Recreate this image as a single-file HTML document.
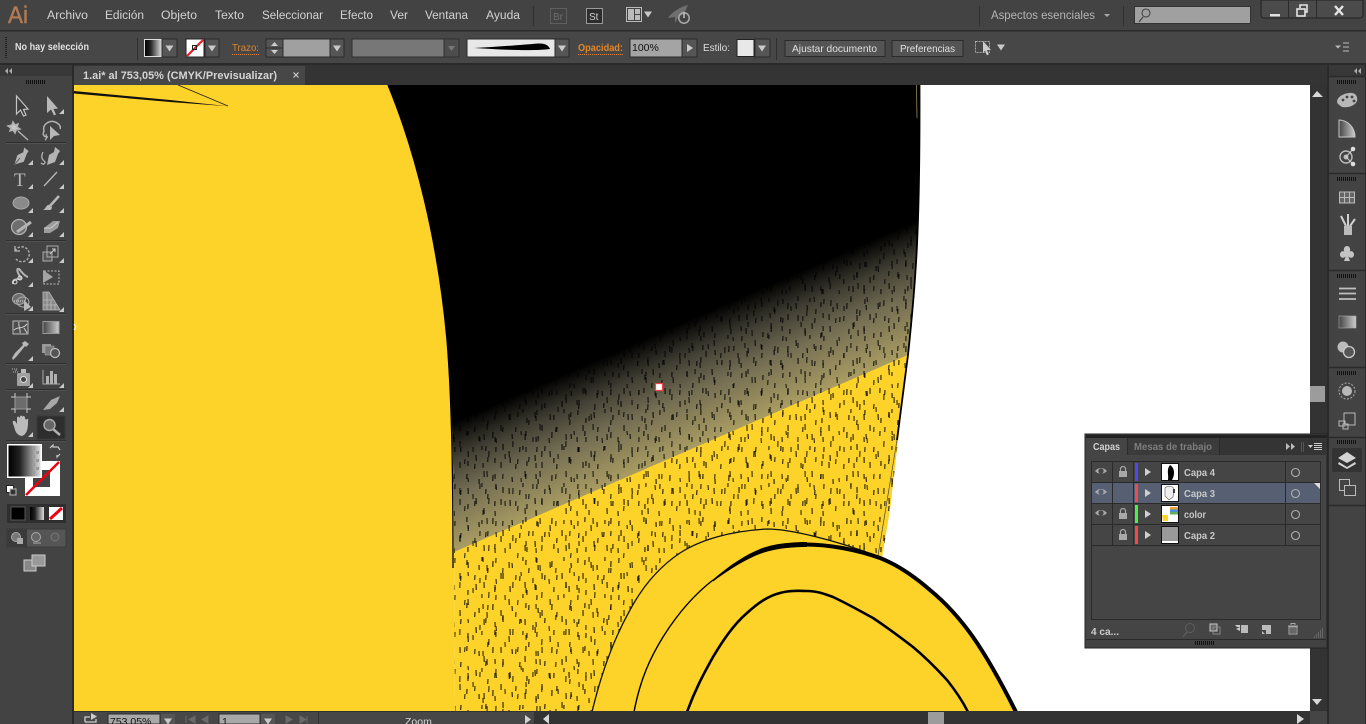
<!DOCTYPE html>
<html lang="es"><head><meta charset="utf-8"><title>Illustrator</title>
<style>
html,body{margin:0;padding:0;background:#434343;width:1366px;height:724px;overflow:hidden}
svg{display:block;position:absolute;left:0;top:0}
text{font-family:"Liberation Sans",sans-serif;font-size:11px;fill:#d0d0d0}
.m{font-size:11.5px;fill:#d2d2d2}
.b{font-weight:bold}
.lay{font-size:10.5px;font-weight:bold;fill:#c8c8c8}
</style></head><body>
<svg width="1366" height="724" viewBox="0 0 1366 724" xmlns="http://www.w3.org/2000/svg">
<defs>
<linearGradient id="shade" gradientUnits="userSpaceOnUse" x1="680" y1="306" x2="734" y2="430">
<stop offset="0" stop-color="#000"/><stop offset=".12" stop-color="#000"/><stop offset=".36" stop-color="#403e33"/><stop offset=".62" stop-color="#736d53"/><stop offset="1" stop-color="#a99c62"/>
</linearGradient>
<linearGradient id="bw" x1="0" x2="1" y1="0" y2="0"><stop offset="0" stop-color="#000"/><stop offset=".35" stop-color="#222"/><stop offset="1" stop-color="#ddd"/></linearGradient>
<linearGradient id="gg" x1="0" x2="1" y1="0" y2="0"><stop offset="0" stop-color="#444"/><stop offset="1" stop-color="#ccc"/></linearGradient>
<pattern id="tA" patternUnits="userSpaceOnUse" width="41" height="37">
<path fill="none" stroke="#000" stroke-opacity=".8" stroke-width="1.150" d="M4 3l-.2 5M17 7l.3 6M31 2l-.1 4M37 13l-.3 5M9 18l.1 6M24 20l-.3 5M3 30l.2 5M33 27l.2 6"/>
</pattern>
<pattern id="tB" patternUnits="userSpaceOnUse" width="53" height="47">
<path fill="none" stroke="#000" stroke-opacity=".8" stroke-width="1.100" d="M10 1l.2 6M26 4l-.3 5M44 8l.3 4M3 14l-.1 5M19 15l.4 5M36 18l-.2 6M49 24l.1 5M12 28l-.3 6M28 31l.2 5M41 36l-.4 5M6 40l.1 5"/>
</pattern>
<pattern id="tC" patternUnits="userSpaceOnUse" width="59" height="43">
<path fill="none" stroke="#000" stroke-opacity=".8" stroke-width="1.200" d="M7 6l.2 5M21 2l-.2 6M40 4l.4 5M54 1l-.2 5M14 16l-.3 5M31 14l.1 6M48 17l-.4 5M4 25l.3 6M23 28l-.2 5M38 27l.2 6M55 31l-.1 5"/>
</pattern>
<clipPath id="jk"><path d="M388 85C415 150 438 240 447 340C451 390 454 450 454 552L455 711H860L882 558L890 510L908 355C916 280 920 230 920 85Z"/></clipPath>
<clipPath id="canvas"><rect x="74" y="85" width="1236" height="626"/></clipPath>
<path id="mk" d="M0 0h-5l5-5z" fill="#c8c8c8"/>
<path id="dn" d="M-4-2.500h8l-4 6z" fill="#c9c9c9"/>
<path id="eye" d="M-6 0C-3-4 3-4 6 0C3 3.500-3 3.500-6 0Z M0-2.600A2.600 2.600 0 1 0 0 2.600A2.600 2.600 0 1 0 0-2.600Z" fill="#a8a8a8" fill-rule="evenodd"/>
<g id="lock"><path d="M-2.500-1v-2a2.500 2.500 0 0 1 5 0v2" fill="none" stroke="#a8a8a8" stroke-width="1.200"/><rect x="-4" y="-1" width="8" height="6" fill="#a8a8a8"/></g>
<g id="grip"><path d="M.5 0v4M2.500 0v4M4.500 0v4M6.500 0v4M8.500 0v4M10.500 0v4M12.500 0v4M14.500 0v4M16.500 0v4M18.500 0v4" stroke="#111" stroke-width="1"/></g>
</defs>

<!-- UI base -->
<rect width="1366" height="724" fill="#434343"/>
<rect y="30" width="1366" height="1.500" fill="#2b2b2b"/>
<rect y="31.500" width="1366" height="32" fill="#474747"/>
<rect y="63" width="1366" height="2" fill="#2a2a2a"/>
<rect x="74" y="65" width="1254" height="20" fill="#343434"/>

<!-- Artwork -->
<g clip-path="url(#canvas)">
<rect x="74" y="85" width="1236" height="626" fill="#fff"/>
<path d="M74 85H388C415 150 438 240 447 340C451 390 454 450 454 552L455 711H74Z" fill="#fdd329"/>
<path d="M388 85C415 150 438 240 447 340C451 390 454 450 454 552L455 711H860L882 558L890 510L908 355C916 280 920 230 920 85Z" fill="#fdd329"/>
<path d="M388 85C415 150 438 240 447 340C451 390 454 450 454 552L908 355C916 280 920 230 920 85Z" fill="url(#shade)"/>
<g clip-path="url(#jk)">
<rect x="440" y="200" width="480" height="511" fill="url(#tA)"/>
<rect x="440" y="200" width="480" height="511" fill="url(#tB)"/>
<rect x="440" y="200" width="480" height="511" fill="url(#tC)"/>
</g>
<path d="M388 85C415 150 438 240 447 340C451 390 453 450 453 568" fill="none" stroke="#000" stroke-width="1.300"/>
<path d="M919.500 85C920 230 916 280 908 355L897 440" fill="none" stroke="#000" stroke-width="1.800"/>
<path d="M916.500 85L917 118" fill="none" stroke="#a99c62" stroke-width=".7"/>
<path d="M897 440L878 556" fill="none" stroke="#444" stroke-width=".7"/>
<path d="M74 91L74 93.500L170 102L228 106.300L170 100Z" fill="#111"/>
<path d="M178 85L228 106" fill="none" stroke="#222" stroke-width=".9"/>
<!-- hump -->
<path d="M592 712C602 670 616 635 630 610C645 582 662 565 680 553C700 540 730 531 767 529C790 529 835 540 877 556C898 565 915 577 930 590C947 604 961 620 973 637C989 660 1005 690 1016 712Z" fill="#fdd329"/>
<path d="M592 712C602 670 616 635 630 610C645 582 662 565 680 553C700 540 730 531 767 529C790 529 835 540 877 556" fill="none" stroke="#111" stroke-width="1.300"/>
<path d="M634 712C640 680 650 658 663 637C678 613 695 594 713 580" fill="none" stroke="#000" stroke-width="1.400"/>
<path d="M713 579.500C730 565 745 555 760 549C775 543 795 542 807 542L807 547C793 547 777 548 761 553.500C746 559 730 569 713 581.500Z" fill="#000"/>
<path d="M805 544.500C830 544.500 858 550 880 558C898 565 915 577 930 590C947 604 961 620 973 637C989 660 1005 690 1016 712" fill="none" stroke="#000" stroke-width="4"/>
<path d="M687 712C695 690 703 675 713 657C722 642 733 625 747 613C758 603 768 596 780 593C790 590 800 591 807 591C817 591 825 594 833 597C848 604 860 611 873 618C888 628 900 637 913 647C925 657 936 668 947 680C955 690 962 700 968 712" fill="none" stroke="#000" stroke-width="2.600"/>
<rect x="655.500" y="383.500" width="7" height="7" fill="#fff" stroke="#f0404a" stroke-width="1.200"/>
</g>

<!-- Menu bar -->
<text x="8" y="23" style="font-size:24px;fill:#b07a52;stroke:#b07a52;stroke-width:.5" textLength="20" lengthAdjust="spacingAndGlyphs">Ai</text>
<text class="m" x="47" y="19" textLength="41" lengthAdjust="spacingAndGlyphs">Archivo</text>
<text class="m" x="105" y="19" textLength="39" lengthAdjust="spacingAndGlyphs">Edición</text>
<text class="m" x="161" y="19" textLength="36" lengthAdjust="spacingAndGlyphs">Objeto</text>
<text class="m" x="215" y="19" textLength="29" lengthAdjust="spacingAndGlyphs">Texto</text>
<text class="m" x="262" y="19" textLength="61" lengthAdjust="spacingAndGlyphs">Seleccionar</text>
<text class="m" x="340" y="19" textLength="33" lengthAdjust="spacingAndGlyphs">Efecto</text>
<text class="m" x="390" y="19" textLength="18" lengthAdjust="spacingAndGlyphs">Ver</text>
<text class="m" x="425" y="19" textLength="43" lengthAdjust="spacingAndGlyphs">Ventana</text>
<text class="m" x="486" y="19" textLength="34" lengthAdjust="spacingAndGlyphs">Ayuda</text>
<rect x="533" y="6" width="1" height="20" fill="#2e2e2e"/>
<rect x="550.500" y="8.500" width="16" height="15" fill="none" stroke="#5f5f5f"/>
<text x="553" y="20" style="font-size:10px;fill:#6c6c6c">Br</text>
<rect x="586.500" y="8.500" width="16" height="15" fill="#2d2d2d" stroke="#999"/>
<text x="589" y="20" style="font-size:10px;fill:#d0d0d0">St</text>
<rect x="626.500" y="7.500" width="15" height="14" fill="none" stroke="#bbb"/>
<rect x="628" y="9" width="6" height="11" fill="#bbb"/><rect x="635" y="9" width="5" height="5" fill="#bbb"/><rect x="635" y="15" width="5" height="5" fill="#bbb"/>
<use href="#dn" x="648" y="14"/>
<path d="M668 18C672 12 680 7 688 5L684 14L679 16L675 23L675 17Z" fill="#6f6f6f"/>
<circle cx="684" cy="18" r="5.200" fill="none" stroke="#aaa" stroke-width="1.500"/><path d="M684 12v6" stroke="#bbb" stroke-width="1.600"/>
<rect x="979" y="6" width="1" height="20" fill="#2e2e2e"/>
<text x="991" y="19" style="font-size:12px;fill:#b4b4b4" textLength="104" lengthAdjust="spacingAndGlyphs">Aspectos esenciales</text>
<path d="M1104 14h6l-3 3z" fill="#aaa"/>
<rect x="1123" y="6" width="1" height="20" fill="#2e2e2e"/>
<rect x="1134.500" y="6.500" width="116" height="17" fill="#a0a0a0" stroke="#333"/>
<circle cx="1146" cy="13" r="4" fill="none" stroke="#444" stroke-width="1.100"/><path d="M1143 17l-4 5" stroke="#444" stroke-width="1.200"/>
<path d="M1261 0h102v15a3 3 0 0 1-3 3h-96a3 3 0 0 1-3-3Z" fill="#4b4b4b" stroke="#222"/>
<path d="M1288.500 0v18M1316.500 0v18" stroke="#2b2b2b"/>
<rect x="1270" y="14" width="10" height="2.500" fill="#e0e0e0"/>
<rect x="1297" y="9" width="8" height="7" fill="none" stroke="#e4e4e4" stroke-width="1.600"/><path d="M1300 8V5h7v7h-2" fill="none" stroke="#e4e4e4" stroke-width="1.600"/>
<path d="M1335 6l8 9M1343 6l-8 9" stroke="#e4e4e4" stroke-width="2.400"/>

<!-- Control bar -->
<path d="M6 37v21" stroke="#222" stroke-width="2" stroke-dasharray="1 1"/>
<text class="b" x="15" y="50" style="font-size:10.500px;fill:#e0e0e0" textLength="74" lengthAdjust="spacingAndGlyphs">No hay selección</text>
<rect x="137" y="38" width="1" height="22" fill="#2f2f2f"/>
<rect x="144.500" y="39.500" width="17" height="17" fill="url(#bw)" stroke="#ddd"/>
<rect x="162" y="39" width="15" height="18" fill="#555" stroke="#2a2a2a"/><use href="#dn" x="169.500" y="48"/>
<rect x="186" y="39" width="18" height="18" fill="#fff" stroke="#222"/><path d="M187 56L203 40" stroke="#ee1c25" stroke-width="2.200"/><rect x="192.500" y="45.500" width="4" height="4" fill="none" stroke="#222"/>
<rect x="205" y="39" width="14" height="18" fill="#555" stroke="#2a2a2a"/><use href="#dn" x="212" y="48"/>
<text x="232" y="51" style="font-size:10.500px;fill:#e0862c" textLength="27" lengthAdjust="spacingAndGlyphs">Trazo:</text>
<path d="M232 54.500h27" stroke="#e0862c" stroke-dasharray="1 1"/>
<rect x="266" y="39" width="17" height="18" fill="#555" stroke="#2a2a2a"/><path d="M266 48h17" stroke="#2a2a2a"/><path d="M271 46l3.500-4 3.500 4zM271 50l3.500 4 3.500-4z" fill="#ccc"/>
<rect x="283" y="39" width="47" height="18" fill="#a0a0a0" stroke="#2a2a2a"/>
<rect x="330" y="39" width="14" height="18" fill="#555" stroke="#2a2a2a"/><use href="#dn" x="337" y="48"/>
<rect x="352" y="39" width="92" height="18" fill="#777" stroke="#2f2f2f"/>
<rect x="444" y="39" width="15" height="18" fill="#4c4c4c" stroke="#2f2f2f"/><path d="M448 46h7l-3.500 5z" fill="#777"/>
<rect x="467" y="39" width="88" height="18" fill="#e8e8e8" stroke="#2a2a2a"/>
<path d="M474 48C495 47 520 45 538 43.500C546 43 549 46 550 49C535 51 505 50 474 48Z" fill="#000"/>
<rect x="555" y="39" width="14" height="18" fill="#555" stroke="#2a2a2a"/><use href="#dn" x="562" y="48"/>
<text class="b" x="578" y="51" style="font-size:10.500px;fill:#e0862c" textLength="45" lengthAdjust="spacingAndGlyphs">Opacidad:</text>
<path d="M578 54.500h45" stroke="#e0862c" stroke-dasharray="1 1"/>
<rect x="630" y="39" width="52" height="18" fill="#a4a4a4" stroke="#2a2a2a"/>
<text x="632" y="51" style="font-size:10.500px;fill:#111">100%</text>
<rect x="682" y="39" width="15" height="18" fill="#555" stroke="#2a2a2a"/><path d="M687 44l6 4-6 4z" fill="#ccc"/>
<text x="703" y="51" style="font-size:10.500px;fill:#ddd" textLength="27" lengthAdjust="spacingAndGlyphs">Estilo:</text>
<rect x="737" y="39.500" width="17" height="17" fill="#e8e8e8" stroke="#222"/>
<rect x="755" y="39" width="15" height="18" fill="#555" stroke="#2a2a2a"/><use href="#dn" x="762" y="48"/>
<rect x="776" y="38" width="1" height="22" fill="#2f2f2f"/>
<rect x="785" y="40.500" width="100" height="16" fill="#545454" stroke="#2a2a2a"/>
<text x="792" y="52" style="font-size:10.500px;fill:#e0e0e0" textLength="85" lengthAdjust="spacingAndGlyphs">Ajustar documento</text>
<rect x="892" y="40.500" width="71" height="16" fill="#545454" stroke="#2a2a2a"/>
<text x="900" y="52" style="font-size:10.500px;fill:#e0e0e0" textLength="55" lengthAdjust="spacingAndGlyphs">Preferencias</text>
<rect x="975.500" y="41.500" width="14" height="11" fill="none" stroke="#aaa" stroke-dasharray="2 1"/><path d="M983 41l8 9-4 0 1.800 4.500-2 .8-1.800-4.500-2 2.200z" fill="#ccc"/>
<use href="#dn" x="1001" y="47"/>
<path d="M1343 43h6M1343 47h6M1343 51h6" stroke="#bbb"/><path d="M1335 45.500h6l-3 3z" fill="#bbb"/>

<!-- Document tab -->
<rect x="74" y="66" width="231" height="19" fill="#474747"/>
<text x="83" y="79" style="font-size:11px;font-weight:bold;fill:#d4d4d4" textLength="194" lengthAdjust="spacingAndGlyphs">1.ai* al 753,05% (CMYK/Previsualizar)</text>
<path d="M293.500 72.500l5 5M298.500 72.500l-5 5" stroke="#ccc" stroke-width="1.200"/>

<!-- Left tools panel -->
<rect x="0" y="65" width="72" height="659" fill="#434343"/>
<rect x="0" y="65" width="72" height="11" fill="#383838"/>
<rect x="72" y="65" width="2" height="659" fill="#2a2a2a"/>
<path d="M8 68l-3 3 3 3zM12 68l-3 3 3 3z" fill="#aaa"/>
<use href="#grip" x="26" y="80"/>
<path d="M6 142.500h60M6 240.500h60M6 313.500h60M6 363.500h60M6 389.500h60M6 440.500h60" stroke="#2f2f2f" stroke-width="1"/>
<path d="M6 143.500h60M6 241.500h60M6 314.500h60M6 364.500h60M6 390.500h60M6 441.500h60" stroke="#515151" stroke-width="1"/>

<path d="M16.500 96V114L20.500 110L23.500 116L26 115L23.500 109.500L28 109Z" fill="#3c3c3c" stroke="#c4c4c4" stroke-width="1.200"/>
<path d="M47 96V113L51 109.500L54 115.500L56 114.500L53.500 109L58 108.500Z" fill="#b8b8b8"/><use href="#mk" x="64" y="114"/>

<path d="M13 122l2 3 3-1-1 3 3 2-4 1-1 3-2-3-3 1 1-3-3-2 4-1zM18 131l10 9" fill="#c4c4c4" stroke="#b0b0b0" stroke-width="1.500"/>
<path d="M48 137C42 137 43 133 44 131C42 124 50 120 55 122C60 124 61 127 60 129" fill="none" stroke="#b0b0b0" stroke-width="1.500"/><path d="M50 126V140L54 136L60 135Z" fill="#b8b8b8"/><path d="M46 134C47 137 47 139 45 140" fill="none" stroke="#b0b0b0" stroke-width="1.300"/>

<path d="M24 147L29 151L27 154L24 162L14 165L17 155L23 152ZM15 164L20 158" fill="#b4b4b4" stroke="#444" stroke-width=".6"/><use href="#mk" x="33" y="165"/>
<path d="M55 147L60 151L58 154L55 162L47 165L49 155L54 152Z" fill="#b4b4b4"/><path d="M43 152C40 158 43 160 45 162C45 164 43 165 41 163" fill="none" stroke="#b4b4b4" stroke-width="1.300"/><use href="#mk" x="64" y="165"/>

<text x="14" y="186" style="font-family:'Liberation Serif',serif;font-size:19px;fill:#b8b8b8">T</text><use href="#mk" x="33" y="189"/>
<path d="M44 186L57 172" stroke="#b8b8b8" stroke-width="1.300"/><use href="#mk" x="64" y="189"/>

<ellipse cx="21" cy="203" rx="8" ry="6" fill="#8a8a8a" stroke="#aaa"/><use href="#mk" x="33" y="213"/>
<path d="M59 196L49 207" stroke="#b8b8b8" stroke-width="2.500"/><path d="M43 210C46 209 46 204 50 205C53 206 52 210 50 210Z" fill="#b8b8b8"/><use href="#mk" x="64" y="213"/>

<circle cx="19" cy="227" r="7.500" fill="#6e6e6e" stroke="#b4b4b4" stroke-width="1.200"/><path d="M17 232L31 222" stroke="#b4b4b4" stroke-width="3"/><use href="#mk" x="33" y="237"/>
<path d="M44 228L53 221H60L58 228L50 233H44Z" fill="#9c9c9c"/><path d="M44 228H51L58 222" stroke="#ccc" fill="none"/><use href="#mk" x="64" y="237"/>

<path d="M15 251A7.500 7.500 0 1 1 16 259" fill="none" stroke="#aaa" stroke-width="1.500" stroke-dasharray="2.500 1.500"/><path d="M15 246v5h5" fill="none" stroke="#bbb" stroke-width="1.200"/><use href="#mk" x="33" y="263"/>
<rect x="43" y="252" width="9" height="9" fill="#555" stroke="#aaa"/><rect x="47" y="246" width="11" height="11" fill="none" stroke="#aaa"/><path d="M50 254l5-5M52 249h3v3" stroke="#ccc" fill="none"/><use href="#mk" x="64" y="263"/>

<path d="M13 284C12 278 18 280 21 278C17 272 16 268 19 269C22 272 24 276 28 277" fill="none" stroke="#b4b4b4" stroke-width="2"/><circle cx="15" cy="282" r="2" fill="none" stroke="#ddd"/><circle cx="20" cy="278" r="2" fill="none" stroke="#ddd"/><use href="#mk" x="33" y="287"/>
<rect x="44" y="271" width="15" height="13" fill="none" stroke="#bbb" stroke-dasharray="2 1.500"/><path d="M43 270L53 277L43 283Z" fill="#a4a4a4"/>

<ellipse cx="19" cy="299" rx="6.500" ry="5.500" fill="#6e6e6e" stroke="#aaa"/><ellipse cx="23" cy="302" rx="6" ry="5" fill="none" stroke="#aaa"/><path d="M14 301h12" stroke="#ddd" stroke-dasharray="1 1"/><path d="M24 300V311L31 307Z" fill="#b8b8b8"/><use href="#mk" x="33" y="311"/>
<path d="M43 292H49L60 310H43ZM47 292V310M51 301V310M55 304V310M43 300H53M43 305H57" fill="#888" stroke="#bbb" stroke-width=".8"/><use href="#mk" x="64" y="312"/>

<rect x="13" y="321" width="15" height="13" fill="#4e4e4e" stroke="#bbb"/><path d="M14 330C18 326 22 330 27 324M19 322C18 326 21 331 20 333M24 328L27 333" fill="none" stroke="#ccc"/>
<rect x="43" y="321.500" width="16" height="12" fill="url(#gg)" stroke="#999"/>

<g transform="translate(-30 0)"><path d="M55 341L59 344L56 347L55 346L47 356L43 360L42 358L45 353L53 345L52 343Z" fill="#b8b8b8"/></g><use href="#mk" x="33" y="361"/>
<rect x="42" y="344" width="9" height="9" fill="#999"/><rect x="45" y="346" width="9" height="9" fill="#777" stroke="#aaa" stroke-width=".6"/><circle cx="55" cy="353" r="4.500" fill="#555" stroke="#bbb" stroke-width="1.300"/>

<path d="M12 369h6M13 372h5M16 370v1" stroke="#bbb" stroke-dasharray="1 1"/><rect x="17" y="373" width="13" height="13" rx="1" fill="#a0a0a0"/><rect x="21" y="369" width="5" height="4" fill="#bbb"/><circle cx="23.500" cy="379.500" r="3" fill="#444" stroke="#ddd"/><use href="#mk" x="33" y="388"/>
<path d="M43 370V384H60" fill="none" stroke="#aaa"/><rect x="46" y="376" width="3" height="8" fill="#b0b0b0"/><rect x="50" y="371" width="3" height="13" fill="#b0b0b0"/><rect x="54" y="374" width="3" height="10" fill="#b0b0b0"/><use href="#mk" x="64" y="388"/>

<rect x="15" y="397" width="12" height="12" fill="#6c6c6c" stroke="#999"/><path d="M11 397h4M11 409h4M27 397h4M27 409h4M15 393v4M27 393v4M15 409v4M27 409v4" stroke="#ccc"/>
<path d="M43 410L51 400L60 396L57 403L50 409Z" fill="#a8a8a8"/><use href="#mk" x="64" y="412"/>

<path d="M15 430C14 425 12 423 13 421C15 420 16 422 17 424V418C17 416 19 416 19.500 418L20 417C20 415 22 415 22.500 417C23 415 25 416 25 418L26 420C27 418 29 419 28 421C28 426 28 434 22 436C19 436 16 433 15 430Z" fill="#bbb"/><use href="#mk" x="33" y="437"/>
<rect x="37" y="416" width="28" height="23" fill="#2e2e2e" stroke="#3a3a3a"/>
<circle cx="49.500" cy="425" r="5.500" fill="#666" stroke="#a8a8a8" stroke-width="1.500"/><path d="M53.500 429.500L60 435" stroke="#b0b0b0" stroke-width="2.500"/>

<rect x="25" y="461" width="35" height="35" fill="#fff"/>
<rect x="33" y="470" width="17" height="17" fill="#434343"/>
<rect x="7" y="444" width="35" height="34" fill="#fff"/>
<rect x="8.500" y="445.500" width="32" height="31" fill="url(#bw)"/>
<path d="M32 447h3v3h-3zM36 451h3v3h-3zM32 455h3v3h-3zM36 459h3v3h-3zM32 463h3v3h-3zM36 467h3v3h-3zM32 471h3v3h-3z" fill="#9a9a9a"/>
<path d="M26 495L59 462" stroke="#ee0010" stroke-width="2.400"/>
<path d="M50 448l3-3v2h5l2 3M60 454l-3 3v-2" fill="none" stroke="#c8c8c8" stroke-width="1.200"/>
<rect x="6.500" y="485.500" width="7" height="7" fill="#fff" stroke="#222"/><rect x="10" y="489" width="6" height="6" fill="#333" stroke="#bbb"/>
<rect x="7" y="504" width="59" height="19" fill="#2f2f2f"/>
<rect x="11" y="507" width="14" height="13" fill="#000" stroke="#555"/>
<rect x="30" y="507" width="14" height="13" fill="url(#bw)"/>
<rect x="49" y="507" width="14" height="13" fill="#fff"/><path d="M50 519L62 508" stroke="#ee0010" stroke-width="3"/>
<rect x="7" y="529" width="59" height="18" fill="#555" stroke="#3a3a3a"/>
<rect x="7" y="529" width="20" height="18" fill="#3a3a3a"/>
<circle cx="16" cy="537" r="4.500" fill="#777" stroke="#aaa"/><rect x="17" y="538" width="6" height="6" fill="#aaa"/>
<circle cx="36" cy="537" r="4.500" fill="#666" stroke="#aaa"/><path d="M33 543h8" stroke="#aaa"/>
<circle cx="55" cy="537" r="4" fill="#5a5a5a" stroke="#777"/>
<rect x="24" y="560" width="12" height="11" fill="#888" stroke="#ccc"/><rect x="32" y="555" width="13" height="11" fill="#999" stroke="#ccc"/>
<path d="M74 324l2 3-2 3" stroke="#fff" fill="none"/>

<!-- Right scrollbar -->
<rect x="1310" y="85" width="17" height="627" fill="#333"/>
<path d="M1312 97l5-6 6 6z" fill="#d8d8d8"/>
<rect x="1310" y="386" width="15" height="16" fill="#9c9c9c"/>
<path d="M1312 699h10l-5 6z" fill="#d8d8d8"/>
<!-- bottom -->
<rect x="74" y="711" width="1253" height="13" fill="#333"/>
<rect x="74" y="712" width="460" height="12" fill="#474747"/>
<path d="M85 722V717h5M85 722h11v-3" fill="none" stroke="#ccc" stroke-width="1.300"/><path d="M91 713l6 3.500-6 3.500z" fill="#ccc"/>
<rect x="108" y="714" width="52" height="10" fill="#a8a8a8" stroke="#2c2c2c"/>
<text x="110" y="725" style="font-size:10.500px;fill:#111">753,05%</text>
<rect x="161" y="714" width="14" height="10" fill="#555"/><use href="#dn" x="168" y="721"/>
<path d="M186 716v7M195 716l-6 3.500 6 3.500zM208 716l-6 3.500 6 3.500z" fill="#6a6a6a" stroke="#6a6a6a"/>
<rect x="219" y="714" width="41" height="10" fill="#a8a8a8" stroke="#2c2c2c"/>
<text x="222" y="725" style="font-size:10.500px;fill:#111">1</text>
<rect x="261" y="714" width="14" height="10" fill="#555"/><use href="#dn" x="268" y="721"/>
<path d="M286 716l6 3.500-6 3.500zM300 716l6 3.500-6 3.500zM307 716v7" fill="#6a6a6a" stroke="#6a6a6a"/>
<rect x="318" y="712" width="1" height="12" fill="#333"/>
<text x="405" y="725" style="font-size:10.500px;fill:#d8d8d8">Zoom</text>
<path d="M525 715l6 4.500-6 4.500z" fill="#d0d0d0"/>
<path d="M549 714l-6 5 6 5z" fill="#d8d8d8"/>
<rect x="928" y="712" width="16" height="12" fill="#9c9c9c"/>
<path d="M1297 714l7 5-7 5z" fill="#d8d8d8"/>
<rect x="1310" y="711" width="17" height="13" fill="#454545"/>

<!-- Right dock -->
<rect x="1327" y="65" width="39" height="659" fill="#434343"/>
<rect x="1327" y="65" width="2" height="659" fill="#2a2a2a"/>
<rect x="1329" y="65" width="37" height="11" fill="#383838"/>
<rect x="1365" y="65" width="1" height="659" fill="#2a2a2a"/>
<path d="M1357 68l-3 3 3 3zM1361 68l-3 3 3 3z" fill="#aaa"/>
<path d="M1329 76.500h36M1329 173.500h36M1329 270.500h36M1329 367.500h36M1329 437.500h36M1329 505.500h36" stroke="#2a2a2a" stroke-width="1.500"/>
<use href="#grip" x="1337" y="80"/><use href="#grip" x="1337" y="177"/><use href="#grip" x="1337" y="274"/><use href="#grip" x="1337" y="371"/><use href="#grip" x="1337" y="440"/>
<path d="M1338 104C1335 100 1340 94 1349 93C1356 92 1358 97 1357 101C1355 106 1348 108 1342 107Z" fill="#b8b8b8"/>
<circle cx="1343" cy="100" r="1.400" fill="#444"/><circle cx="1347" cy="97" r="1.400" fill="#444"/><circle cx="1352" cy="97" r="1.400" fill="#444"/><circle cx="1354" cy="101" r="1.400" fill="#444"/>
<path d="M1339 120C1348 120 1355 128 1355 137H1339Z" fill="url(#gg)" stroke="#c8c8c8"/>
<circle cx="1346" cy="157" r="6" fill="none" stroke="#bbb" stroke-width="1.400"/><circle cx="1346" cy="157" r="2.500" fill="#bbb"/><path d="M1346 157L1353 149M1346 157L1353 164" stroke="#ccc"/><circle cx="1353" cy="149" r="2.300" fill="#ddd"/><circle cx="1353" cy="164" r="2.300" fill="#ddd"/>
<rect x="1339.500" y="192" width="15" height="11" fill="#666" stroke="#bbb"/><path d="M1344.500 192v11M1349.500 192v11M1339.500 197.500h15" stroke="#bbb"/>
<rect x="1344" y="226" width="8" height="9" fill="#bbb"/><path d="M1346 226L1341 216M1348 226L1348 214M1350 226L1355 219" stroke="#d0d0d0" stroke-width="2"/>
<path d="M1347 246C1350 246 1351 250 1349.500 251.500C1353 250 1355 254 1353.500 256.500C1352 258.500 1349 258 1348 256L1350 261H1344L1346 256C1345 258 1342 258.500 1340.500 256.500C1339 254 1341 250 1344.500 251.500C1343 250 1344 246 1347 246Z" fill="#c4c4c4"/>
<path d="M1339 288.500h17M1339 293.500h17M1339 299h17" stroke="#c0c0c0" stroke-width="1.800"/>
<rect x="1339" y="316" width="17" height="12" fill="url(#gg)" stroke="#aaa" stroke-width=".6"/>
<circle cx="1343" cy="347" r="5.500" fill="#bbb"/><circle cx="1349" cy="352" r="5.500" fill="#555" stroke="#ccc" stroke-width="1.300"/>
<circle cx="1347" cy="391" r="5" fill="#b8b8b8"/><circle cx="1347" cy="391" r="8" fill="none" stroke="#aaa" stroke-dasharray="2 1.500"/>
<path d="M1344 424V413H1355V425H1346" fill="none" stroke="#bbb"/><rect x="1339" y="421" width="6" height="5" fill="none" stroke="#bbb"/><rect x="1343" y="424" width="5" height="5" fill="none" stroke="#bbb"/>
<rect x="1332" y="448" width="30" height="24" rx="2" fill="#333"/>
<path d="M1347 452L1356 458L1347 463L1338 458Z" fill="#d4d4d4"/><path d="M1339 462L1347 467L1355 462L1356 464L1347 469L1338 464Z" fill="#d4d4d4"/>
<rect x="1339.500" y="479.500" width="10" height="11" fill="none" stroke="#bbb"/><rect x="1344.500" y="485.500" width="11" height="10" fill="#434343" stroke="#bbb"/>

<!-- Layers panel -->
<rect x="1085" y="434" width="242" height="214" fill="#454545" stroke="#222"/>
<rect x="1086" y="435" width="241" height="3" fill="#222"/>
<rect x="1086" y="438" width="240" height="17" fill="#343434"/>
<rect x="1086" y="438" width="41" height="18" fill="#454545"/>
<rect x="1127" y="438" width="92" height="17" fill="#3b3b3b"/>
<path d="M1219.500 438v17M1127.500 438v17" stroke="#2b2b2b"/>
<text class="b" x="1093" y="450" style="font-size:10.500px;fill:#d2d2d2" textLength="27" lengthAdjust="spacingAndGlyphs">Capas</text>
<text class="b" x="1134" y="450" style="font-size:10.500px;fill:#7d7d7d" textLength="78" lengthAdjust="spacingAndGlyphs">Mesas de trabajo</text>
<path d="M1286 443l4 3.500-4 3.500zM1291 443l4 3.500-4 3.500z" fill="#bbb"/>
<path d="M1301.500 442v10M1303.500 442v10" stroke="#555"/>
<path d="M1308 445h5l-2.500 3z" fill="#ccc"/><path d="M1314 443.500h8M1314 445.500h8M1314 447.500h8M1314 449.500h8" stroke="#ccc"/>
<rect x="1091.500" y="461.500" width="229" height="158" fill="#454545" stroke="#2a2a2a"/>
<rect x="1092" y="483" width="228" height="20" fill="#566072"/>
<path d="M1092 482.500h228M1092 503.500h228M1092 524.500h228M1092 545.500h228" stroke="#2a2a2a"/>
<path d="M1112.500 462v84M1133.500 462v84M1285.500 462v84" stroke="#2a2a2a"/>
<use href="#eye" x="1101" y="471"/><use href="#eye" x="1101" y="492"/><use href="#eye" x="1101" y="513"/>
<use href="#lock" x="1123" y="472"/><use href="#lock" x="1123" y="514"/><use href="#lock" x="1123" y="535"/>
<rect x="1135" y="463" width="3" height="18" fill="#4a4af0"/><rect x="1135" y="484" width="3" height="18" fill="#f04a4a"/><rect x="1135" y="505" width="3" height="18" fill="#4af04a"/><rect x="1135" y="526" width="3" height="18" fill="#f04a4a"/>
<path d="M1145 468l6 4-6 4zM1145 489l6 4-6 4zM1145 510l6 4-6 4zM1145 531l6 4-6 4z" fill="#d0d0d0"/>
<rect x="1161.500" y="463.500" width="17" height="17" fill="#fff" stroke="#111"/><path d="M1170 465C1175 468 1175 475 1172 480H1168C1169 475 1166 470 1170 465Z" fill="#000"/>
<rect x="1161.500" y="484.500" width="17" height="17" fill="#fff" stroke="#111"/><path d="M1165 488C1168 485 1174 486 1174 490L1173 497L1169 500L1165 496Z" fill="#eee" stroke="#555" stroke-width=".6"/><path d="M1174 489v4" stroke="#000" stroke-width="1.500"/>
<rect x="1161.500" y="505.500" width="17" height="17" fill="#fff" stroke="#111"/><rect x="1170" y="507" width="8" height="2.500" fill="#f0a030"/><rect x="1170" y="509.500" width="8" height="2.500" fill="#4a90d8"/><rect x="1170" y="512" width="8" height="2.500" fill="#60b060"/><path d="M1162 515h6v6h-5z" fill="#fdd329"/>
<rect x="1161.500" y="526.500" width="17" height="17" fill="#999" stroke="#111"/><rect x="1162" y="541" width="16" height="2" fill="#fff"/>
<text class="lay" x="1184" y="476" textLength="31" lengthAdjust="spacingAndGlyphs">Capa 4</text>
<text class="lay" x="1184" y="497" textLength="31" lengthAdjust="spacingAndGlyphs">Capa 3</text>
<text class="lay" x="1184" y="518" textLength="22" lengthAdjust="spacingAndGlyphs">color</text>
<text class="lay" x="1184" y="539" textLength="31" lengthAdjust="spacingAndGlyphs">Capa 2</text>
<g fill="none" stroke="#b0b0b0" stroke-width="1.100"><circle cx="1295.500" cy="472.500" r="4"/><circle cx="1295.500" cy="493.500" r="4"/><circle cx="1295.500" cy="514.500" r="4"/><circle cx="1295.500" cy="535.500" r="4"/></g>
<path d="M1314 483h6v6z" fill="#ddd"/>
<text class="b" x="1091" y="635" style="font-size:10.500px;fill:#ccc" textLength="28" lengthAdjust="spacingAndGlyphs">4 ca...</text>
<circle cx="1190" cy="628" r="4.500" fill="none" stroke="#5e5e5e"/><path d="M1187 632l-4 5" stroke="#5e5e5e" stroke-width="1.300"/>
<rect x="1210" y="624" width="7" height="7" fill="#666" stroke="#ccc"/><rect x="1213" y="627" width="7" height="7" fill="none" stroke="#888"/>
<path d="M1235 625h5v2h-3zM1236 629l4-2 0 4z" fill="#ccc"/><rect x="1241" y="625" width="7" height="8" fill="#bbb"/>
<path d="M1262 625h9v9h-9z" fill="#bbb"/><path d="M1262 630h4v4h-4z" fill="#454545"/><path d="M1262 631l3 3h-3z" fill="#bbb"/>
<path d="M1288 626h10M1291 625v-1.500h4v1.500M1289 627h8v7h-8z" fill="none" stroke="#aaa"/><path d="M1291 628v5M1293 628v5M1295 628v5" stroke="#aaa" stroke-width=".7"/>
<path d="M1314 637h10M1316 635h8M1318 633h6M1320 631h4M1322 629h2" stroke="#888" stroke-dasharray="1 1"/>
<path d="M1086 639.500h240" stroke="#2a2a2a"/>
<rect x="1086" y="640" width="240" height="7" fill="#424242"/>
<use href="#grip" x="1195" y="641"/>
</svg>
</body></html>
